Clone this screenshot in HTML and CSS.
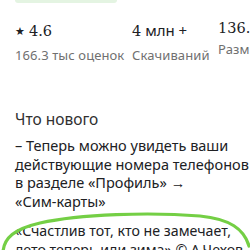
FILE: index.html
```html
<!DOCTYPE html>
<html lang="ru">
<head>
<meta charset="utf-8">
<link rel="stylesheet" href="styles.css">
</head>
<body>
<div class="page">
  <div class="chip"></div>
  <div class="stats">
    <div class="stat">
      <div class="value"><span class="star">★</span><span class="num">4.6</span></div>
      <div class="label">166.3 тыс оценок</div>
    </div>
    <div class="stat">
      <div class="value"><span class="num">4</span> млн +</div>
      <div class="label">Скачиваний</div>
    </div>
    <div class="stat raised">
      <div class="value"><span class="num">136.1</span></div>
      <div class="label">Разм</div>
    </div>
  </div>
  <h2 class="title">Что нового</h2>
  <p class="text">– Теперь можно увидеть ваши действующие номера телефонов в разделе «Профиль» → <span class="nw">«Сим-карты»</span></p>
  <p class="text quote">«Счастлив тот, кто не замечает, лето теперь или зима» © А.Чехов</p>
</div>
<svg class="oval" width="250" height="250" viewBox="0 0 250 250">
  <path d="M3 252 C4 238 14 229 40 223 C80 214 150 212 200 216 C230 219 244 229 249 246" fill="none" stroke="#74cf45" stroke-width="3.2" stroke-linecap="round"/>
</svg>
</body>
</html>
```
FILE: styles.css
```css
html, body {
  margin: 0;
  padding: 0;
  background: #fff;
  width: 250px;
  height: 250px;
  overflow: hidden;
}
body {
  position: relative;
  font-family: "Noto Sans", sans-serif;
  color: #202124;
}
.page {
  padding-left: 15px;
}
.chip {
  width: 102px;
  height: 3px;
  background: #e4f4e2;
  border-radius: 0 0 7px 7px;
}
.stats {
  display: grid;
  grid-template-columns: 117px 86px 40px;
  margin-top: 17px;
  white-space: nowrap;
}
.value {
  font-size: 15px;
  line-height: 20px;
  height: 20px;
}
.star {
  font-size: 11px;
  margin-right: 4px;
  position: relative;
  top: -1px;
}
.num {
  font-family: "DejaVu Serif", "Liberation Serif", serif;
  font-size: 14.5px;
}
.label {
  margin-top: 6px;
  font-size: 13px;
  line-height: 18px;
  letter-spacing: 0.1px;
  color: #707070;
}
.raised {
  margin-top: -3px;
}
.raised .label {
  margin-top: 3px;
}
.title {
  margin: 45px 0 0;
  font-size: 15.5px;
  font-weight: normal;
  line-height: 20px;
  color: #303030;
}
.text {
  margin: 7px 0 0;
  font-size: 14.5px;
  line-height: 18.5px;
  color: #202124;
  width: 235px;
}
.nw {
  white-space: nowrap;
}
.quote {
  margin-top: 12px;
  font-size: 14.2px;
}
.oval {
  position: absolute;
  left: 0;
  top: 0;
}
```
